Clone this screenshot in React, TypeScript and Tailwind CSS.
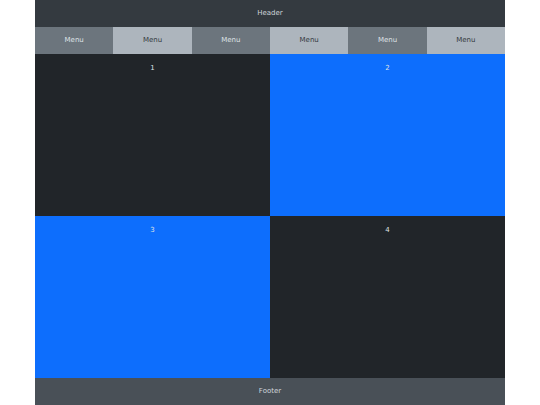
import React from 'react';

const menus = ['bg-[#6c757d] text-[#dee2e6]', 'bg-[#adb5bd] text-[#343a40]', 'bg-[#6c757d] text-[#dee2e6]', 'bg-[#adb5bd] text-[#343a40]', 'bg-[#6c757d] text-[#dee2e6]', 'bg-[#adb5bd] text-[#343a40]'];

const cells = [
  { n: '1', cls: 'bg-[#212529]' },
  { n: '2', cls: 'bg-[#0d6efd]' },
  { n: '3', cls: 'bg-[#0d6efd]' },
  { n: '4', cls: 'bg-[#212529]' },
];

export default function App() {
  return (
    <div className="w-[540px] h-[405px] bg-white flex justify-center" style={{ fontFamily: '"DejaVu Sans", sans-serif' }}>
      <div className="w-[470px] h-full flex flex-col text-[7px] leading-none">
        <div className="h-[27px] shrink-0 bg-[#343a40] text-[#ced4da] flex items-center justify-center">Header</div>
        <div className="h-[27px] shrink-0 grid grid-cols-6">
          {menus.map((c, i) => (
            <div key={i} className={`flex items-center justify-center ${c}`}>Menu</div>
          ))}
        </div>
        <div className="flex-1 grid grid-cols-2 grid-rows-2">
          {cells.map(c => (
            <div key={c.n} className={`${c.cls} text-[#dee2e6] flex justify-center pt-[11px]`}>{c.n}</div>
          ))}
        </div>
        <div className="h-[27px] shrink-0 bg-[#495057] text-[#ced4da] flex items-center justify-center">Footer</div>
      </div>
    </div>
  );
}
